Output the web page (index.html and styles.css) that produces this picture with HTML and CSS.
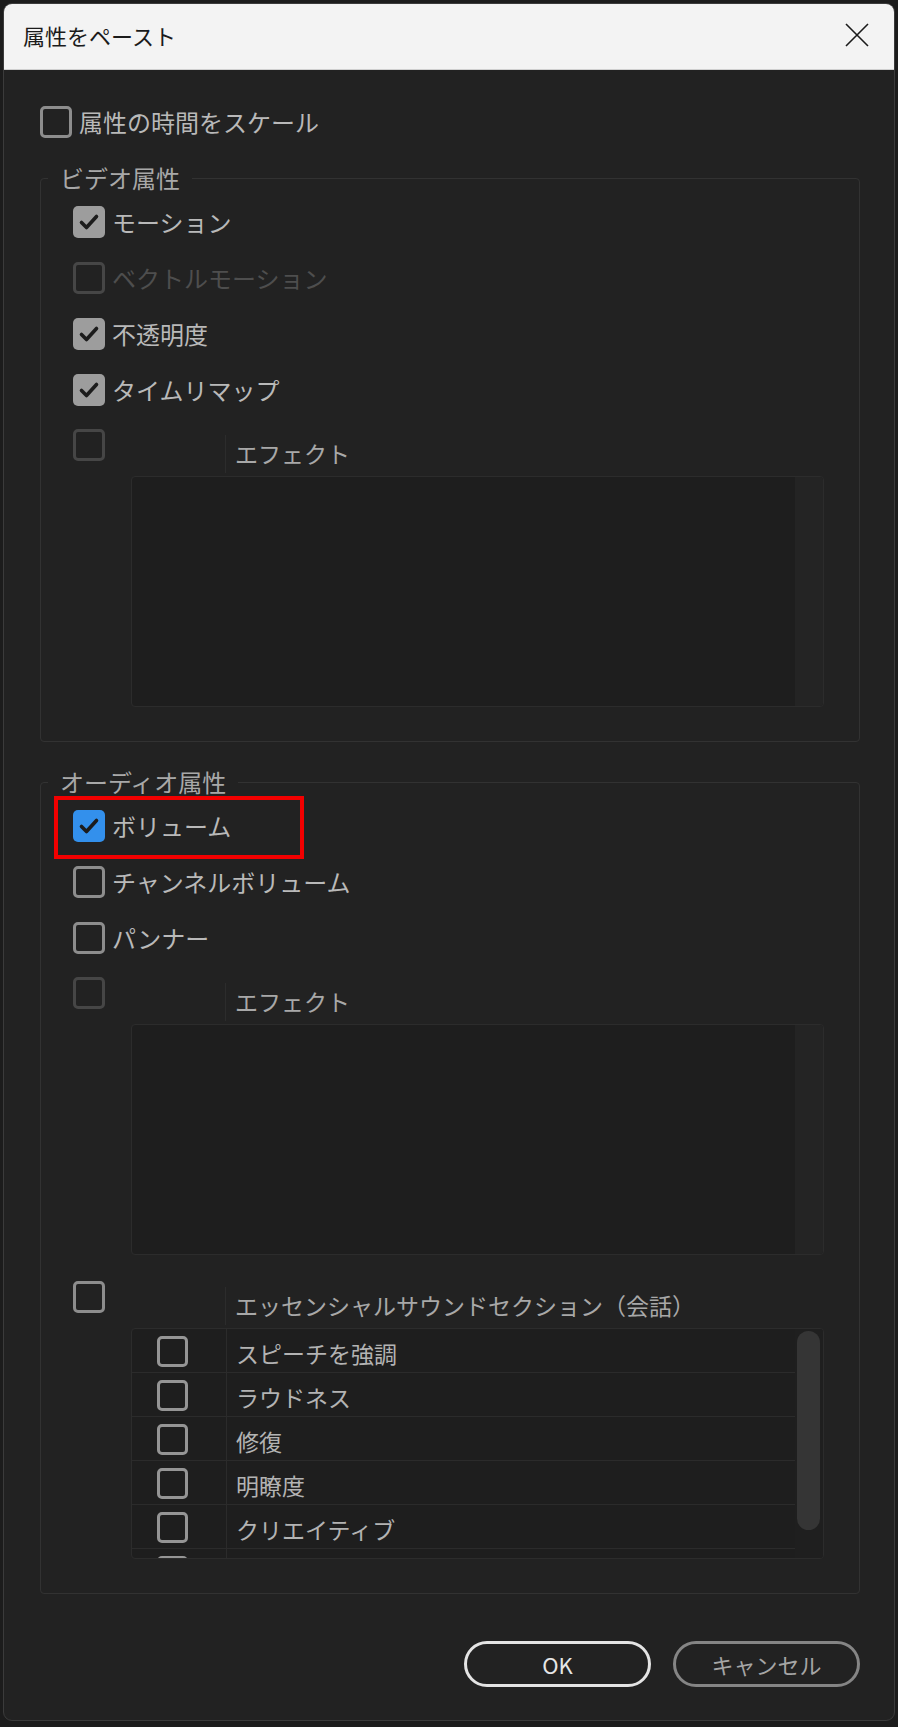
FILE: index.html
```html
<!DOCTYPE html>
<html lang="ja">
<head>
    <meta charset="UTF-8">
    <meta name="viewport" content="width=device-width, initial-scale=1.0">
    <title>属性をペースト</title>
    <link rel="stylesheet" href="styles.css">
</head>
<body>
    <div class="window">
        <div class="titlebar">
            <span class="title">属性をペースト</span>
            <button class="close" aria-label="閉じる">
                <svg width="24" height="24" viewBox="0 0 24 24"><path d="M1 1 L23 23 M23 1 L1 23" stroke="#1b1b1b" stroke-width="1.6" fill="none"/></svg>
            </button>
        </div>

        <div class="content">
            <div class="opt opt-top"><span class="cb"></span><span>属性の時間をスケール</span></div>

            <fieldset class="group">
                <legend>ビデオ属性</legend>
                <div class="group-body">
                    <div class="opt"><span class="cb checked"><svg viewBox="0 0 32 32"><path d="M8.5 16.5 L13.5 21.5 L23.5 10.5"/></svg></span><span>モーション</span></div>
                    <div class="opt disabled"><span class="cb"></span><span>ベクトルモーション</span></div>
                    <div class="opt"><span class="cb checked"><svg viewBox="0 0 32 32"><path d="M8.5 16.5 L13.5 21.5 L23.5 10.5"/></svg></span><span>不透明度</span></div>
                    <div class="opt"><span class="cb checked"><svg viewBox="0 0 32 32"><path d="M8.5 16.5 L13.5 21.5 L23.5 10.5"/></svg></span><span>タイムリマップ</span></div>

                    <div class="fx">
                        <span class="cb off"></span>
                        <div class="fx-head">エフェクト</div>
                        <div class="fx-list">
                            <div class="fx-rows"></div>
                            <div class="fx-track"></div>
                        </div>
                    </div>
                </div>
            </fieldset>

            <fieldset class="group">
                <legend>オーディオ属性</legend>
                <div class="group-body">
                    <div class="opt marked">
                        <span class="cb checked blue"><svg viewBox="0 0 32 32"><path d="M8.5 16.5 L13.5 21.5 L23.5 10.5"/></svg></span><span>ボリューム</span>
                        <span class="mark"></span>
                    </div>
                    <div class="opt"><span class="cb"></span><span>チャンネルボリューム</span></div>
                    <div class="opt"><span class="cb"></span><span>パンナー</span></div>

                    <div class="fx">
                        <span class="cb off"></span>
                        <div class="fx-head">エフェクト</div>
                        <div class="fx-list">
                            <div class="fx-rows"></div>
                            <div class="fx-track"></div>
                        </div>
                    </div>

                    <div class="fx fx-sound">
                        <span class="cb"></span>
                        <div class="fx-head">エッセンシャルサウンドセクション（会話）</div>
                        <div class="fx-list">
                            <div class="fx-rows">
                                <div class="row"><span class="cb small"></span><span class="cell">スピーチを強調</span></div>
                                <div class="row"><span class="cb small"></span><span class="cell">ラウドネス</span></div>
                                <div class="row"><span class="cb small"></span><span class="cell">修復</span></div>
                                <div class="row"><span class="cb small"></span><span class="cell">明瞭度</span></div>
                                <div class="row"><span class="cb small"></span><span class="cell">クリエイティブ</span></div>
                                <div class="row"><span class="cb small"></span><span class="cell"></span></div>
                            </div>
                            <div class="fx-track plain"><span class="thumb"></span></div>
                        </div>
                    </div>
                </div>
            </fieldset>

            <div class="actions">
                <button class="btn btn-ok">OK</button>
                <button class="btn btn-cancel">キャンセル</button>
            </div>
        </div>
    </div>
</body>
</html>
```

FILE: styles.css
```css
body {
    margin: 0;
    background: #1c1c1c;
    font-family: "Noto Sans CJK JP", "Noto Sans", sans-serif;
    color: #b9b9b9;
}
.window {
    margin: 3px 0 0 3px;
    width: 892px;
    height: 1718px;
    box-sizing: border-box;
    border: 1px solid #3b3b3b;
    border-radius: 9px;
    background: #222222;
    overflow: hidden;
}
.titlebar {
    background: #f3f3f3;
    border-bottom: 1px solid #cfcfcf;
    display: flex;
    align-items: center;
    justify-content: space-between;
    padding: 0 25px 4px 19px;
    height: 61px;
}
.title {
    font-size: 22px;
    color: #1b1b1b;
}
.close {
    background: none;
    border: none;
    padding: 0;
    width: 24px;
    height: 24px;
    display: flex;
}
.content {
    padding: 36px 34px 0 36px;
}
.opt {
    display: flex;
    align-items: center;
    gap: 7px;
    height: 32px;
    font-size: 24px;
    line-height: 30px;
    position: relative;
}
.opt + .opt {
    margin-top: 24px;
}
.opt.disabled {
    color: #4e4e4e;
}
.cb {
    flex: none;
    width: 32px;
    height: 32px;
    box-sizing: border-box;
    border: 3px solid #8d8d8d;
    border-radius: 5px;
    display: block;
}
.opt.disabled .cb,
.cb.off {
    border-color: #464646;
}
.cb.checked {
    border: none;
    background: #9d9d9d;
}
.cb.checked.blue {
    background: #3390ec;
}
.cb svg {
    width: 32px;
    height: 32px;
    display: block;
}
.cb svg path {
    fill: none;
    stroke: #1c1c1c;
    stroke-width: 3.6;
    stroke-linecap: round;
    stroke-linejoin: round;
}
.mark {
    position: absolute;
    left: -19px;
    top: -14px;
    width: 250px;
    height: 63px;
    box-sizing: border-box;
    border: 4px solid #f20000;
}
.group {
    margin: 28px 0 0;
    padding: 0;
    border: 1px solid #323232;
    border-radius: 4px;
    min-width: 0;
}
.group legend {
    margin-left: 7px;
    padding: 0 12px;
    font-size: 24px;
    line-height: 24px;
    color: #a8a8a8;
}
.group-body {
    padding: 16px 35px 34px 32px;
}
.fx {
    display: grid;
    grid-template-columns: 58px 1fr;
    margin-top: 23px;
}
.fx-sound {
    margin-top: 26px;
}
.fx-head {
    margin: 6px 0 0 94px;
    height: 38px;
    line-height: 36px;
    border-left: 1px solid #2c2c2c;
    padding-left: 9px;
    font-size: 23px;
    color: #a8a8a8;
    white-space: nowrap;
}
.fx-list {
    grid-column: 2;
    margin-top: 3px;
    height: 231px;
    box-sizing: border-box;
    border: 1px solid #2c2c2c;
    border-radius: 4px;
    background: #1e1e1e;
    display: flex;
    overflow: hidden;
}
.fx-rows {
    flex: 1;
    overflow: hidden;
}
.fx-track {
    width: 28px;
    background: #242424;
    padding: 2px 3px 0 2px;
    box-sizing: border-box;
}
.fx-track.plain {
    background: #1f1f1f;
}
.thumb {
    display: block;
    height: 199px;
    border-radius: 12px;
    background: #353535;
}
.row {
    height: 44px;
    box-sizing: border-box;
    border-bottom: 1px solid #2b2b2b;
    display: flex;
    align-items: center;
}
.cb.small {
    width: 31px;
    height: 31px;
    margin: 1px 38px 0 25px;
    border-color: #959595;
}
.cell {
    align-self: stretch;
    border-left: 1px solid #2b2b2b;
    padding: 6px 0 0 9px;
    line-height: 37px;
    font-size: 23px;
    color: #b3b3b3;
}
.actions {
    display: flex;
    justify-content: flex-end;
    gap: 22px;
    margin-top: 47px;
}
.btn {
    width: 187px;
    height: 46px;
    border-radius: 23px;
    background: transparent;
    font-family: "Noto Sans CJK JP", "Noto Sans", sans-serif;
    font-size: 22px;
    padding: 0;
}
.btn-ok {
    border: 3px solid #e4e4e4;
    color: #e6e6e6;
}
.btn-cancel {
    border: 3px solid #858585;
    color: #a5a5a5;
}
```
